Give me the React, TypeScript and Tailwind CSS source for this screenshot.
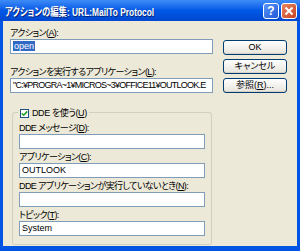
import React from "react";

const jp = "font-['Liberation_Sans','Noto_Sans_CJK_JP',sans-serif] [font-feature-settings:'palt']";

function Field({ label, value, className = "" }: { label: React.ReactNode; value?: React.ReactNode; className?: string }) {
  return (
    <div className={"flex flex-col " + className}>
      <div className="h-[12px] leading-[12px] text-[9px] tracking-[-0.6px] text-black whitespace-nowrap">{label}</div>
      <div className="h-[15px] bg-white border border-[#7F9DB9] px-[2px] text-[9px] leading-[13px] whitespace-nowrap overflow-hidden text-black">
        {value}
      </div>
    </div>
  );
}

function Btn({ children }: { children: React.ReactNode }) {
  return (
    <button className="h-[15px] w-[64px] rounded-[3px] border border-[#003C74] bg-gradient-to-b from-white to-[#E6E4DB] text-[9px] leading-[13px] text-black whitespace-nowrap shadow-[inset_0_-1px_0_#D6D0C5]">
      {children}
    </button>
  );
}

export default function App() {
  return (
    <div className={"w-[300px] h-[251px] flex flex-col bg-[#0054E3] " + jp}>
      {/* title bar */}
      <div className="h-[21px] flex items-center pl-[5px] pr-[3px] bg-gradient-to-b from-[#3D8BF8] via-[#0058E6] to-[#0048D0]">
        <div className="flex-1 overflow-hidden whitespace-nowrap">
          <span className="inline-block origin-left scale-x-[0.76] text-[11px] font-bold text-white [text-shadow:1px_1px_#0A1F6F]">
            アクションの編集: URL:MailTo Protocol
          </span>
        </div>
        <div className="flex gap-[2px]">
          <div className="w-[16px] h-[16px] rounded-[3px] border border-white bg-gradient-to-br from-[#5A94F8] to-[#1F59D8] flex items-center justify-center text-white text-[12px] font-bold leading-none">
            ?
          </div>
          <div className="w-[16px] h-[16px] rounded-[3px] border border-white bg-gradient-to-br from-[#E9835E] to-[#C8421E] flex items-center justify-center">
            <svg width="10" height="10" viewBox="0 0 10 10">
              <path d="M1.5 1.5 L8.5 8.5 M8.5 1.5 L1.5 8.5" stroke="white" strokeWidth="2" />
            </svg>
          </div>
        </div>
      </div>
      {/* body */}
      <div className="flex-1 mx-[3px] mb-[5px] bg-[#ECE9D8] flex gap-[10px] pl-[7px] pt-[6px]">
        <div className="w-[203px] flex flex-col">
          <Field
            label={<>アクション(<span className="underline">A</span>):</>}
            value={<span className="bg-[#316AC5] text-white px-[1px]">open</span>}
          />
          <Field
            className="mt-[12px]"
            label={<>アクションを実行するアプリケーション(<span className="underline">L</span>):</>}
            value={<span className="tracking-[-0.75px]">"C:¥PROGRA~1¥MICROS~3¥OFFICE11¥OUTLOOK.E</span>}
          />
          {/* group box */}
          <div className="relative mt-[19px] ml-[2px] w-[200px] h-[133px] border border-[#D0D0BF] rounded-[3px] px-[6px] pt-[9px]">
            <div className="absolute -top-[6px] left-[5px] flex items-center gap-[3px] bg-[#ECE9D8] px-[2px] text-[9px] leading-[12px] whitespace-nowrap">
              <div className="w-[9px] h-[9px] bg-white border border-[#1C5180] flex items-center justify-center">
                <svg width="7" height="7" viewBox="0 0 7 7">
                  <path d="M0.8 3.3 L2.7 5.2 L6.2 1.4" stroke="#21A121" strokeWidth="1.6" fill="none" />
                </svg>
              </div>
              <span className="tracking-[-0.4px]">DDE を使う(<span className="underline">U</span>)</span>
            </div>
            <Field label={<>DDE メッセージ(<span className="underline">D</span>):</>} />
            <Field className="mt-[2px]" label={<>アプリケーション(<span className="underline">C</span>):</>} value="OUTLOOK" />
            <Field className="mt-[2px]" label={<>DDE アプリケーションが実行していないとき(<span className="underline">N</span>):</>} />
            <Field className="mt-[2px]" label={<>トピック(<span className="underline">T</span>):</>} value="System" />
          </div>
        </div>
        <div className="flex flex-col gap-[4px] pt-[13px]">
          <Btn>OK</Btn>
          <Btn>キャンセル</Btn>
          <Btn>参照(<span className="underline">R</span>)...</Btn>
        </div>
      </div>
    </div>
  );
}
